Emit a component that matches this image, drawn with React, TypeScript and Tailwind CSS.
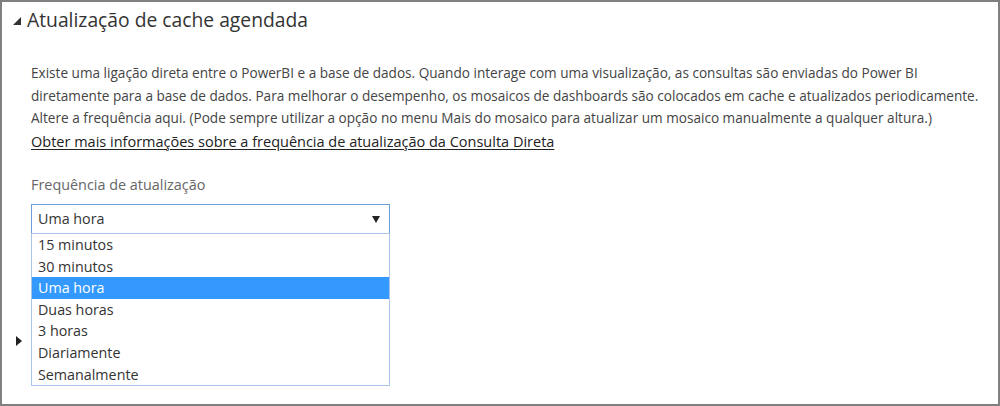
import React from "react";

const options = [
  "15 minutos",
  "30 minutos",
  "Uma hora",
  "Duas horas",
  "3 horas",
  "Diariamente",
  "Semanalmente",
];

const App = () => {
  const selected = "Uma hora";

  return (
    <div
      className="w-[1000px] h-[406px] border-2 border-[#808080] bg-white overflow-hidden text-[#333]"
      style={{ fontFamily: '"Open Sans", "Noto Sans", sans-serif' }}
    >
      {/* expanded section header */}
      <div className="h-[36px] flex items-center pl-[11px]">
        <svg width="8" height="8" viewBox="0 0 8 8" className="mr-[6px] mt-[2px]">
          <polygon points="8,0 8,8 0,8" fill="#333" />
        </svg>
        <span className="text-[19.3px] leading-[36px] text-[#333]">
          Atualização de cache agendada
        </span>
      </div>

      <div className="pl-[29px] pr-[20px]">
        <p className="mt-[24px] text-[13.6px] leading-[22.5px] text-[#444] whitespace-nowrap">
          Existe uma ligação direta entre o PowerBI e a base de dados. Quando interage com uma visualização, as consultas são enviadas do Power BI
          <br />
          diretamente para a base de dados. Para melhorar o desempenho, os mosaicos de dashboards são colocados em cache e atualizados periodicamente.
          <br />
          Altere a frequência aqui. (Pode sempre utilizar a opção no menu Mais do mosaico para atualizar um mosaico manualmente a qualquer altura.)
        </p>
        <a className="block text-[14.5px] leading-[22.5px] mt-[1px] text-[#222] underline underline-offset-2">
          Obter mais informações sobre a frequência de atualização da Consulta Direta
        </a>

        <div className="mt-[21px] text-[14.4px] leading-[22px] text-[#666]">
          Frequência de atualização
        </div>

        <div className="relative mt-[8px] w-[359px]">
          <div className="h-[30px] border border-[#6c9fdc] flex items-center justify-between pl-[6px] pr-[9px] text-[14.3px] text-[#333]">
            <span>{selected}</span>
            <svg width="8" height="7" viewBox="0 0 8 7">
              <polygon points="0,0 8,0 4,7" fill="#222" />
            </svg>
          </div>
          <ul className="absolute left-0 top-[29px] w-[359px] bg-white border border-[#a9c4e8] z-10">
            {options.map((o) => (
              <li
                key={o}
                className={
                  o === selected
                    ? "h-[21.6px] leading-[21px] pl-[6px] text-[14.3px] bg-[#3399ff] text-white"
                    : "h-[21.6px] leading-[21px] pl-[6px] text-[14.3px] text-[#333]"
                }
              >
                {o}
              </li>
            ))}
          </ul>
        </div>
      </div>

      {/* collapsed section header, its title hidden under the open list */}
      <div className="mt-[89px] h-[36px] flex items-center pl-[14px]">
        <svg width="6" height="10" viewBox="0 0 6 10">
          <polygon points="0,0 6,5 0,10" fill="#222" />
        </svg>
      </div>
    </div>
  );
};

export default App;
